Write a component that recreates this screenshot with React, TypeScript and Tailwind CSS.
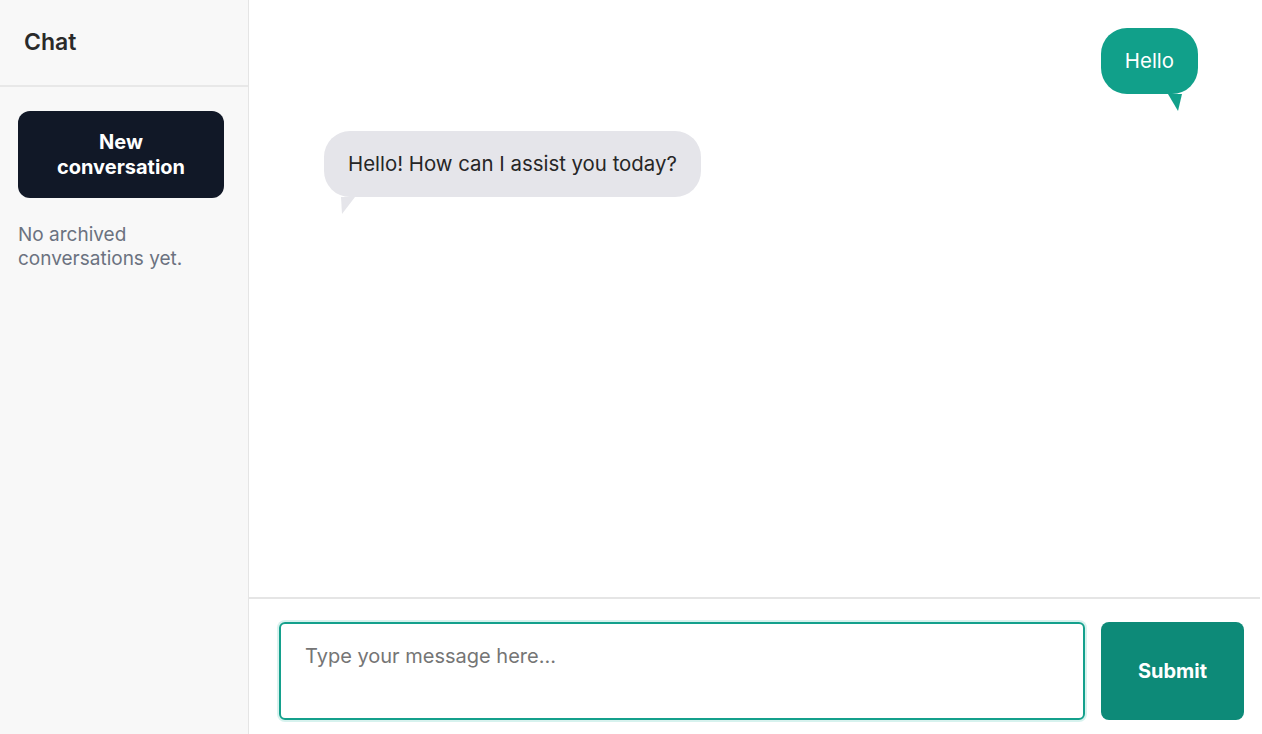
import React, { useState } from "react";

interface Message {
    id: number;
    role: "user" | "assistant";
    text: string;
}

const initialMessages: Message[] = [
    { id: 1, role: "user", text: "Hello" },
    { id: 2, role: "assistant", text: "Hello! How can I assist you today?" },
];

function Bubble({ message }: { message: Message }) {
    if (message.role === "user") {
        return (
            <div className="flex justify-end pr-[62px]">
                <div className="relative rounded-[26px] bg-[#11a08a] px-6 py-[19px] text-[20.4px] leading-[28px] text-white">
                    {message.text}
                    <svg className="absolute right-[14px] top-full" width="16" height="17" viewBox="0 0 16 17">
                        <path d="M0 0 L14 0 L10 17 Z" fill="#11a08a" />
                    </svg>
                </div>
            </div>
        );
    }
    return (
        <div className="flex justify-start pl-[75px]">
            <div className="relative rounded-[26px] bg-[#e5e5ea] px-6 py-[19px] text-[20.4px] leading-[28px] text-[#262626]">
                {message.text}
                <svg className="absolute left-[17px] top-full" width="16" height="17" viewBox="0 0 16 17">
                    <path d="M0 0 L14 0 L1 17 Z" fill="#e5e5ea" />
                </svg>
            </div>
        </div>
    );
}

export default function App() {
    const [messages] = useState<Message[]>(initialMessages);
    const [draft, setDraft] = useState("");

    return (
        <div className="flex h-screen w-full bg-white font-['Inter','Liberation_Sans',sans-serif]">
            {/* sidebar */}
            <aside className="flex w-[249px] shrink-0 flex-col border-r border-[#e5e5e5] bg-[#f8f8f8]">
                <div className="flex h-[87px] items-center border-b-2 border-[#e8e8e8] px-6">
                    <h1 className="text-[23px] font-semibold text-[#2a2a2a]">Chat</h1>
                </div>
                <div className="pl-[18px] pr-6 pt-6">
                    <button className="h-[87px] w-full rounded-xl bg-[#111827] px-4 text-[20px] font-bold leading-[25px] text-white">
                        New
                        <br />
                        conversation
                    </button>
                    <p className="mt-[25px] text-[19px] leading-6 text-[#6b7280]">
                        No archived conversations yet.
                    </p>
                </div>
            </aside>

            {/* main */}
            <main className="flex min-w-0 flex-1 flex-col pr-[2px]">
                <div className="flex flex-1 flex-col gap-[37px] pt-[28px]">
                    {messages.map(m => (
                        <Bubble key={m.id} message={m} />
                    ))}
                </div>
                <div className="flex h-[137px] items-start gap-4 border-t-2 border-[#e5e5e5] pl-[30px] pr-[16px] pt-[23px]">
                    <textarea
                        value={draft}
                        onChange={e => setDraft(e.target.value)}
                        placeholder="Type your message here..."
                        className="h-[98px] flex-1 resize-none rounded-md border-2 border-[#14a08c] px-6 py-[20px] text-[20px] leading-6 text-[#333] outline-none ring-2 ring-[#d7f2ee] placeholder:text-[#757575]"
                    />
                    <button className="h-[98px] w-[143px] rounded-lg bg-[#0d8a78] text-[20px] font-bold text-white">
                        Submit
                    </button>
                </div>
            </main>
        </div>
    );
}
